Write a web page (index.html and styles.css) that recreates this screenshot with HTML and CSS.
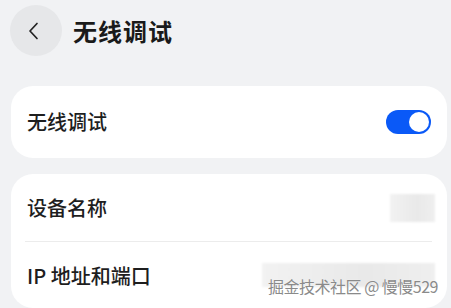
FILE: index.html
```html
<!DOCTYPE html>
<html lang="zh">
<head>
<meta charset="utf-8">
<link rel="stylesheet" href="styles.css">
</head>
<body>
<div class="page">
  <header class="header">
    <div class="back">
      <svg width="16" height="18" viewBox="0 0 16 18"><path d="M11 1.5 L4 9 L11 16.5" fill="none" stroke="#222" stroke-width="1.7" stroke-linecap="round" stroke-linejoin="round"/></svg>
    </div>
    <h1 class="title">无线调试</h1>
  </header>
  <section class="card card-single">
    <div class="row">
      <span class="label">无线调试</span>
      <span class="toggle"><span class="knob"></span></span>
    </div>
  </section>
  <section class="card card-list">
    <div class="row row-list">
      <span class="label">设备名称</span>
      <span class="blur blur-small"></span>
    </div>
    <div class="divider"></div>
    <div class="row row-list">
      <span class="label">IP 地址和端口</span>
      <span class="blur blur-wide"></span>
    </div>
    <span class="watermark">掘金技术社区 @ 慢慢529</span>
  </section>
</div>
</body>
</html>
```

FILE: styles.css
```css
* { box-sizing: border-box; }
html, body { margin: 0; padding: 0; }
body {
  background: #f1f2f4;
  font-family: "Noto Sans CJK SC", "Noto Sans", sans-serif;
  color: #1b1b1b;
  width: 451px;
  height: 308px;
  overflow: hidden;
}
.page { padding: 5px 4px 0 11px; }
.header {
  display: flex;
  align-items: center;
  gap: 11px;
  margin-left: -1px;
  height: 51px;
}
.back {
  width: 52px;
  height: 51px;
  border-radius: 50%;
  background: #e6e7e9;
  display: flex;
  align-items: center;
  justify-content: center;
  padding-right: 4px;
}
.title {
  margin: 0;
  font-size: 24px;
  font-weight: 700;
  line-height: 1;
  letter-spacing: 1px;
  color: #1a1a1a;
}
.card {
  background: #fff;
  border-radius: 22px;
  width: 436px;
}
.card-single { margin-top: 30px; height: 72px; }
.card-list { margin-top: 16px; height: 134px; position: relative; }
.row {
  display: flex;
  align-items: center;
  justify-content: space-between;
  padding: 0 16px 0 16px;
  height: 72px;
}
.label {
  font-size: 20px;
  font-weight: 500;
  line-height: 1;
  color: #1e1e1e;
}
.toggle {
  width: 45px;
  height: 24px;
  border-radius: 12px;
  background: #0a59f7;
  display: flex;
  align-items: center;
  justify-content: flex-end;
  padding-right: 2px;
}
.knob {
  width: 20px;
  height: 20px;
  border-radius: 50%;
  background: #fff;
}
.row-list { height: 67px; padding-right: 12px; }
.divider {
  height: 1px;
  background: #ececec;
  margin: 0 15px 0 14px;
}
.blur {
  background: linear-gradient(90deg, #f2f2f2, #e9e9e9 60%, #efefef);
  filter: blur(1px);
}
.blur-small { width: 45px; height: 28px; }
.blur-wide { width: 173px; height: 24px; margin-top: -2px; }
.watermark {
  position: absolute;
  right: 9px;
  top: 104px;
  font-size: 16px;
  line-height: 1;
  color: #8a8a8a;
  letter-spacing: -0.5px;
  text-shadow: 0 0 1px #fff;
}
```
